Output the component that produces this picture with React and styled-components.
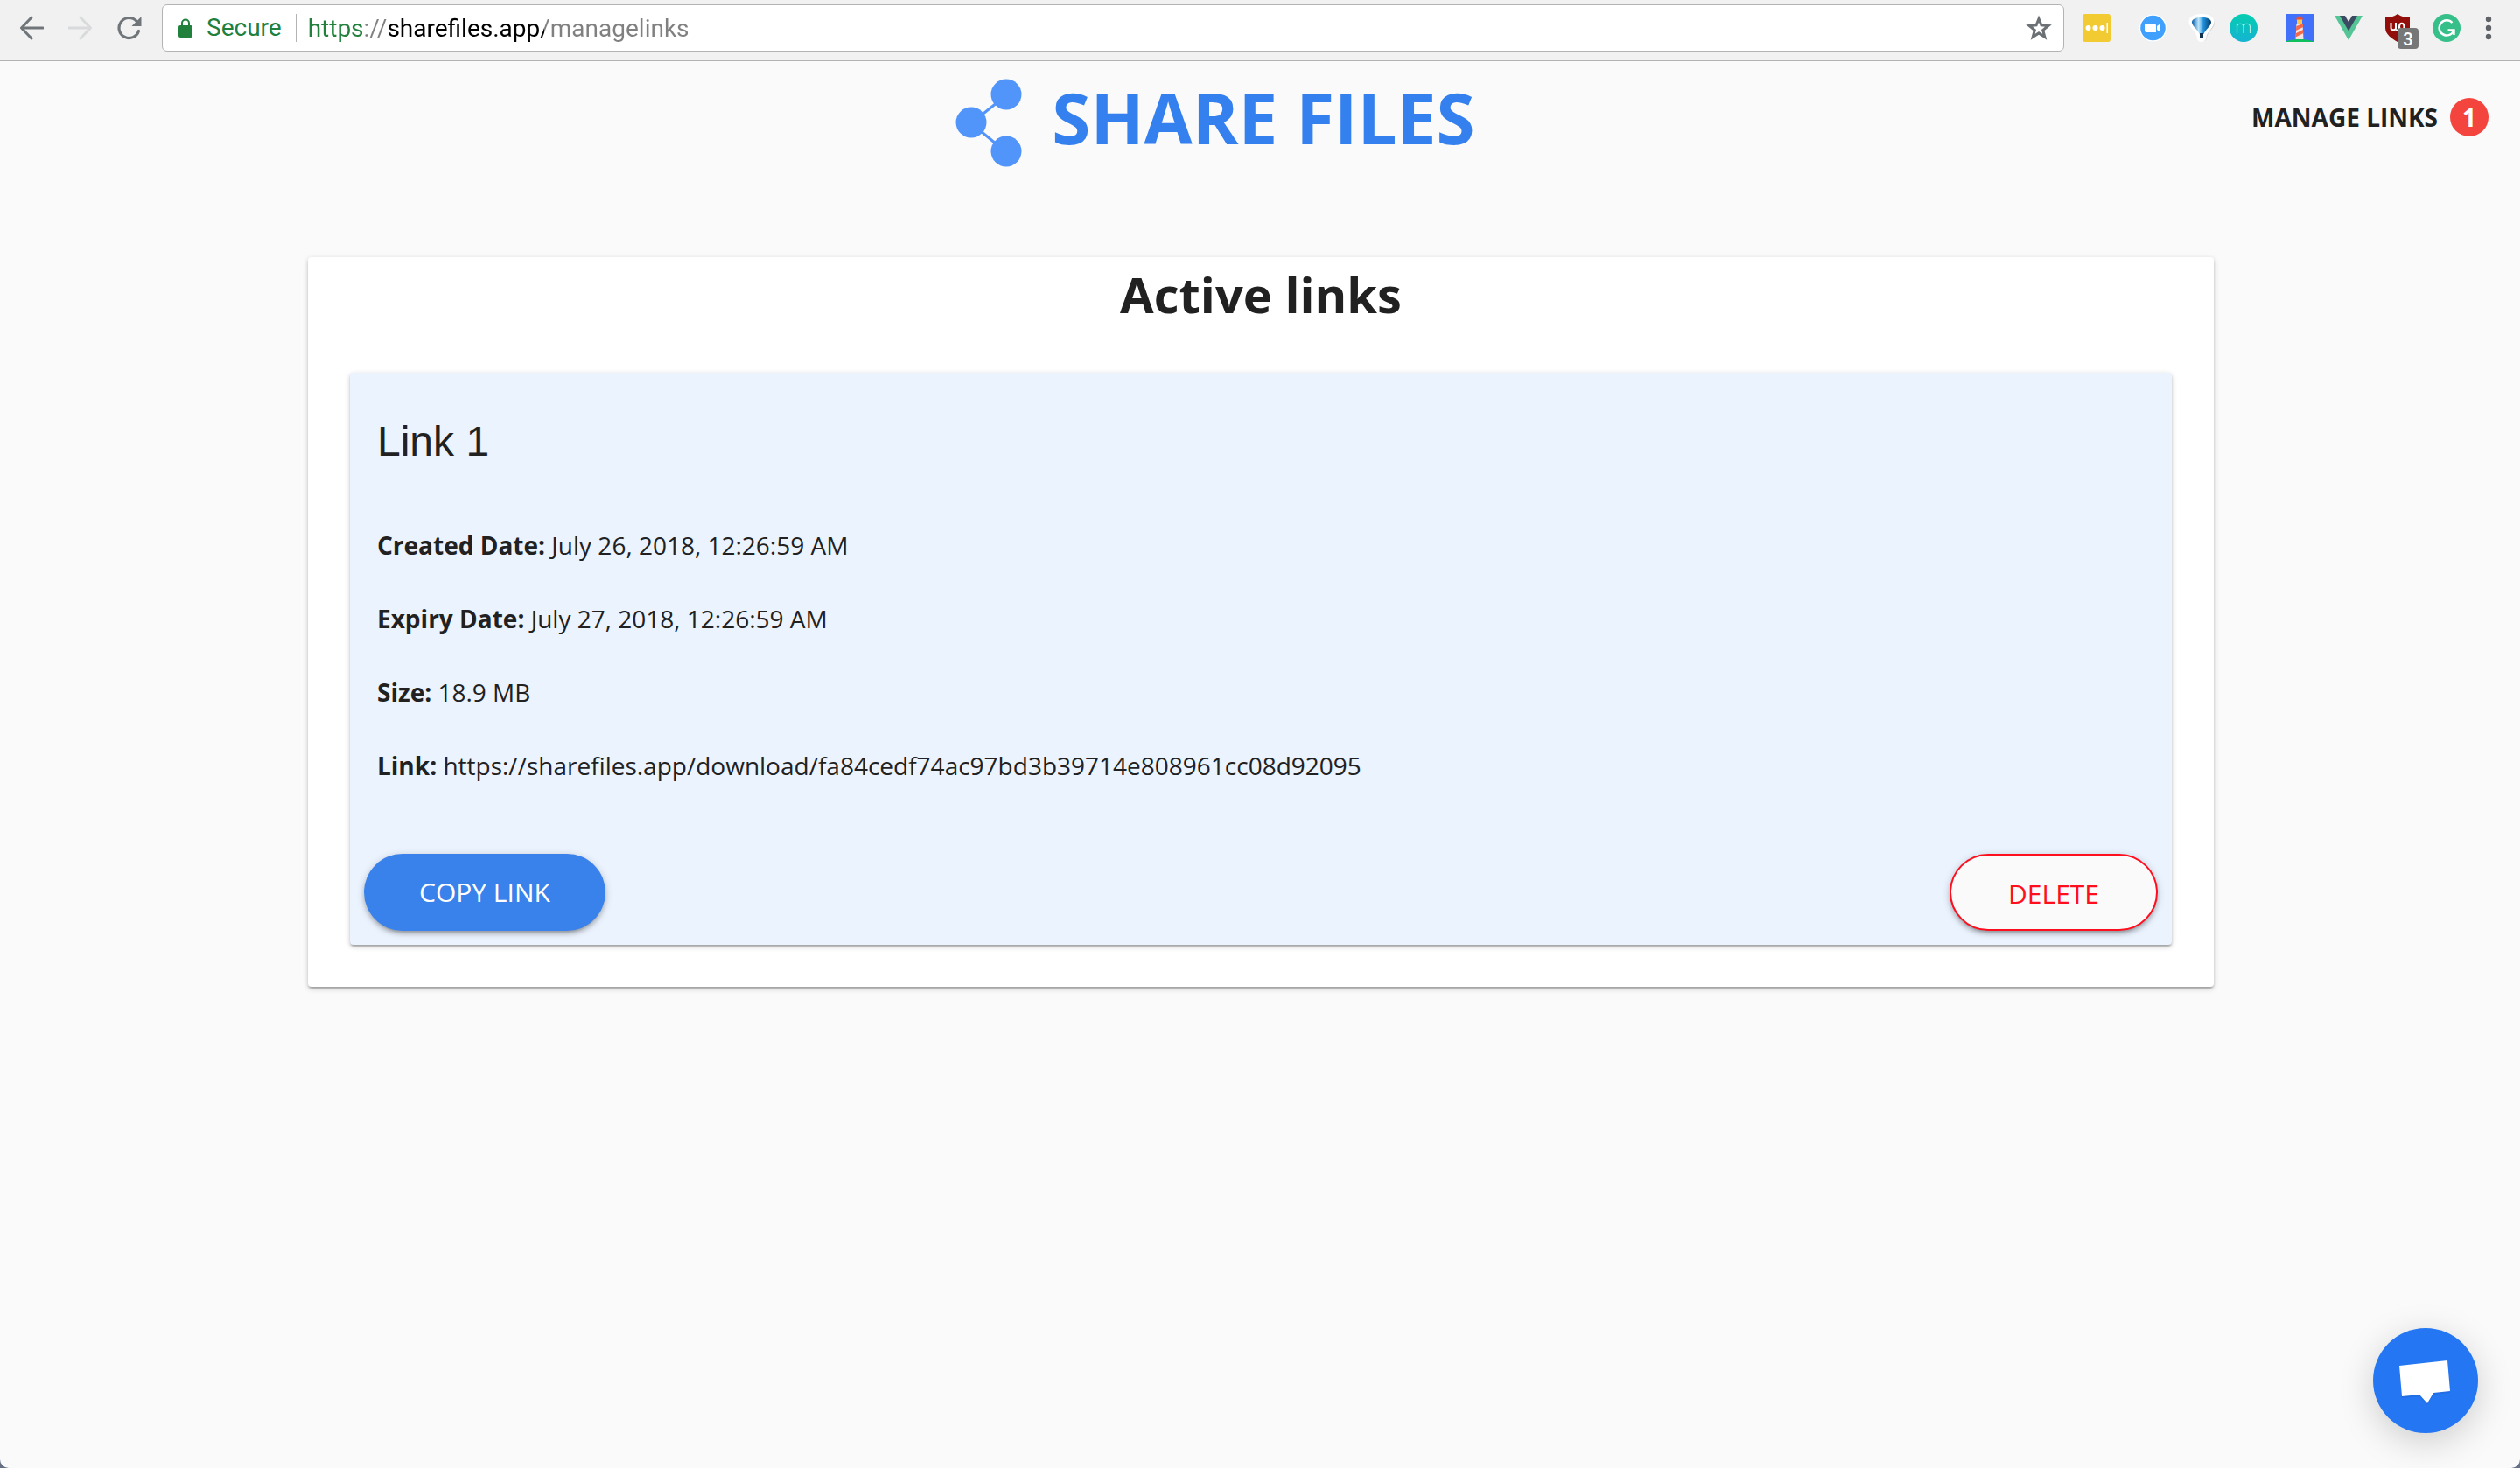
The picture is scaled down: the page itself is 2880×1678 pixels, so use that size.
import React, { useState } from 'react';
import styled, { createGlobalStyle } from 'styled-components';

const GlobalStyle = createGlobalStyle`
  * {
    box-sizing: border-box;
  }

  html {
    background: #667085;
  }

  body {
    color: #212121;
    font-family: 'Open Sans', sans-serif;
    font-size: 28px;
    line-height: 38px;
    margin: 0;
  }

  button,
  input {
    background: none;
    border: 0;
    font-family: inherit;
    margin: 0;
    padding: 0;
  }

  button {
    cursor: pointer;
  }

  svg {
    display: block;
  }
`;

const Window = styled.div`
  background: #fafafa;
  border-radius: 0 0 10px 10px;
  min-height: 100vh;
`;

const Toolbar = styled.div`
  align-items: center;
  background: #f1f1f1;
  border-bottom: 1px solid #b3b3b3;
  display: flex;
  height: 70px;
  padding: 0 20px 5px 8px;
`;

const NavButton = styled.button`
  align-items: center;
  display: flex;
  height: 56px;
  justify-content: center;
  width: 56px;
`;

const AddressBar = styled.div`
  align-items: center;
  background: #fff;
  border: 1px solid #b3b3b3;
  border-radius: 6px;
  display: flex;
  flex: 1;
  font-family: Roboto, sans-serif;
  height: 54px;
  margin: 0 21px 0 9px;
  padding: 0 13px 0 18px;
`;

const Secure = styled.span`
  border-right: 1px solid #b3b3b3;
  color: #20803c;
  line-height: 32px;
  margin-left: 16px;
  padding-right: 16px;
`;

const AddressInput = styled.input`
  background: linear-gradient(
    90deg,
    #20803c 65px,
    #808080 65px,
    #808080 92px,
    #000 92px,
    #000 270px,
    #808080 270px
  );
  background-clip: text;
  color: #808080;
  flex: 1;
  font-size: 28px;
  height: 40px;
  margin-left: 13px;
  min-width: 0;
  outline: 0;
  -webkit-text-fill-color: transparent;
`;

const Extensions = styled.div`
  display: flex;
`;

const ExtensionButton = styled.button`
  display: block;
  height: 32px;
  position: relative;
  width: ${({ $slot }) => $slot}px;
`;

const BlockedCount = styled.span`
  background: #777;
  border-radius: 4px;
  bottom: -8px;
  color: #fff;
  font-family: Roboto, sans-serif;
  font-size: 20px;
  font-weight: 500;
  height: 24px;
  left: 16px;
  line-height: 26px;
  position: absolute;
  text-align: center;
  width: 24px;
`;

const Header = styled.header`
  align-items: center;
  display: grid;
  grid-template-columns: 1fr auto 1fr;
  height: 128px;
  padding: 0 36px;
`;

const Logo = styled.a`
  align-items: center;
  color: #3480ee;
  display: flex;
  font-size: 80px;
  font-weight: 700;
  gap: 34px;
  grid-column: 2;
  line-height: 108px;
  padding-right: 102px;
  text-decoration: none;
`;

const ManageLinks = styled.a`
  align-items: center;
  color: #212121;
  display: flex;
  font-weight: 700;
  gap: 14px;
  justify-self: end;
  text-decoration: none;
`;

const Badge = styled.span`
  background: #f3453e;
  border-radius: 50%;
  color: #fff;
  height: 44px;
  line-height: 44px;
  text-align: center;
  width: 44px;
`;

const Card = styled.section`
  border-radius: 4px;
  box-shadow: 0 2px 6px rgba(0, 0, 0, 0.2), 0 2px 2px rgba(0, 0, 0, 0.14),
    0 4px 2px -2px rgba(0, 0, 0, 0.12);
`;

const ActiveLinks = styled(Card)`
  background: #fff;
  margin: 96px 350px 0 352px;
  padding: 4px 48px 48px;
`;

const Title = styled.h1`
  font-size: 56px;
  line-height: 76px;
  margin: 0 0 52px;
  text-align: center;
`;

const LinkCard = styled(Card)`
  background: #ebf3fe;
  padding: 52px 16px 16px;
`;

const LinkName = styled.h2`
  font-family: 'Liberation Sans', Arial, sans-serif;
  font-size: 48px;
  font-weight: 400;
  line-height: 54px;
  margin: 0 15px 72px;
`;

const Details = styled.dl`
  display: flex;
  flex-direction: column;
  gap: 46px;
  margin: 0 15px 82px;
`;

const Detail = styled.div`
  dt {
    display: inline;
    font-weight: 700;
  }

  dd {
    display: inline;
    margin: 0;
  }
`;

const Actions = styled.div`
  display: flex;
  justify-content: space-between;
`;

const Button = styled.button`
  background: #3982eb;
  border-radius: 44px;
  box-shadow: 0 2px 10px rgba(0, 0, 0, 0.2), 0 4px 4px rgba(0, 0, 0, 0.14),
    0 6px 2px -4px rgba(0, 0, 0, 0.12);
  color: #fff;
  font-size: 30px;
  height: 88px;
  line-height: 40px;
  padding: 0 63px;
`;

const OutlineButton = styled(Button)`
  background: #fafafa;
  border: 2px solid #ff0f1e;
  color: #ff0f1e;
  padding: 4px 65px 0;
`;

const ChatButton = styled.button`
  background: #2476f2;
  border-radius: 50%;
  bottom: 40px;
  box-shadow: 0 10px 40px rgba(0, 0, 0, 0.18);
  height: 120px;
  position: fixed;
  right: 48px;
  width: 120px;
`;

const BackIcon = () => (
  <svg width="28" height="28" viewBox="0 0 28 28" fill="none" stroke="#70757a" strokeWidth="3">
    <path d="M27 14H3M14 2 2.500 14 14 26" strokeLinecap="round" strokeLinejoin="round" />
  </svg>
);

const ForwardIcon = () => (
  <svg width="28" height="28" viewBox="0 0 28 28" fill="none" stroke="#d8dadb" strokeWidth="3">
    <path d="M1 14h24M14 2l11.500 12L14 26" strokeLinecap="round" strokeLinejoin="round" />
  </svg>
);

const ReloadIcon = () => (
  <svg width="28" height="28" viewBox="0 0 28 28">
    <path
      d="M24.500 17.500A11.500 11.500 0 1 1 22 6.200"
      fill="none"
      stroke="#70757a"
      strokeLinecap="round"
      strokeWidth="3.200"
    />
    <path d="M27.500 1v11h-11z" fill="#70757a" />
  </svg>
);

const LockIcon = () => (
  <svg width="16" height="22" viewBox="0 0 16 22">
    <path d="M4 9V5.500a4 4 0 0 1 8 0V9" fill="none" stroke="#20803c" strokeWidth="2" />
    <rect y="8" width="16" height="14" rx="2" fill="#20803c" />
  </svg>
);

const StarIcon = () => (
  <svg width="30" height="30" viewBox="0 0 30 30">
    <path
      d="M15 4.500l2.900 7.400 8 .5-6.200 5.100 2.100 7.800-6.800-4.400-6.800 4.400 2.100-7.800-6.200-5.100 8-.5z"
      fill="none"
      stroke="#6b7075"
      strokeWidth="3"
    />
  </svg>
);

const PasswordIcon = () => (
  <svg width="32" height="32" viewBox="0 0 32 32">
    <rect width="32" height="32" rx="3" fill="#f2ca32" />
    <g fill="#fff">
      <circle cx="6.500" cy="16" r="3" />
      <circle cx="14.500" cy="16" r="3" />
      <circle cx="22.500" cy="16" r="3" />
      <rect x="27.500" y="10" width="1.500" height="12" />
    </g>
  </svg>
);

const VideoIcon = () => (
  <svg width="32" height="32" viewBox="0 0 32 32">
    <circle cx="16.500" cy="16" r="15.500" fill="#fff" />
    <circle cx="16.500" cy="16" r="14.300" fill="#3fa0fd" />
    <path
      d="M7 11h10.500a2.500 2.500 0 0 1 2.500 2.500V21H9.500A2.500 2.500 0 0 1 7 18.500zM21 14l4-3v10l-4-3z"
      fill="#fff"
    />
  </svg>
);

const BalloonIcon = () => (
  <svg width="32" height="32" viewBox="0 0 32 32">
    <defs>
      <linearGradient id="balloon">
        <stop offset="0" stopColor="#0a5fa8" />
        <stop offset="0.350" stopColor="#bfe6fb" />
        <stop offset="0.600" stopColor="#1d8fdb" />
        <stop offset="1" stopColor="#063863" />
      </linearGradient>
    </defs>
    <path
      d="M17.500 2C9 2 3 5 3 10c0 6 8 10 9 17 0 6 10 6 10 0 1-7 9-11 9-17 0-5-5-8-13.500-8z"
      fill="#cfcfcf"
    />
    <path
      d="M16 0C8 0 1.500 3 1.500 9c0 6 8 11 9 17 0 8 11 8 11 0 1-6 9-11 9-17 0-6-6.500-9-14.500-9z"
      fill="#fff"
    />
    <path
      d="M16 4C9 4 5 6 5 9.500 5 14 12 18 13.500 23h5C20 18 27 14 27 9.500 27 6 23 4 16 4z"
      fill="url(#balloon)"
    />
    <path d="M14 22h4v5h-4z" fill="#12344f" />
  </svg>
);

const MomentumIcon = () => (
  <svg width="32" height="32" viewBox="0 0 32 32">
    <defs>
      <linearGradient id="momentum" x2="0" y2="1">
        <stop offset="0" stopColor="#06cdb0" />
        <stop offset="1" stopColor="#14b3d2" />
      </linearGradient>
    </defs>
    <circle cx="16" cy="16" r="16" fill="url(#momentum)" />
    <path
      d="M8.500 22V11M8.500 15c0-5 7.500-5 7.500 0v7M16 15c0-5 7.500-5 7.500 0v7"
      fill="none"
      stroke="#a5efe5"
      strokeWidth="1.200"
    />
  </svg>
);

const LighthouseIcon = () => (
  <svg width="32" height="32" viewBox="0 0 32 32">
    <path d="M0 0h32v32H0z" fill="#4170fa" />
    <path d="M0 32c4-4 28-4 32 0z" fill="#0fc05c" />
    <path d="M12.500 11h7l1 18h-9z" fill="#f7e4e0" />
    <path d="M12.300 14l7.500-3 .4 4-8.300 4zM12 22l8-4 .5 4-9 4.500z" fill="#f4694a" />
    <path d="M13 6h6v5h-6z" fill="#fbc54d" />
    <path d="M12 6.500c0-2 2-4 4-4.500 2 .5 4 2.500 4 4.500z" fill="#e8503a" />
  </svg>
);

const VueIcon = () => (
  <svg width="32" height="32" viewBox="0 0 32 32">
    <path d="M0 2h32L16 30z" fill="#55c596" />
    <path d="M6 2h20L16 19.500z" fill="#3b4b62" />
    <path d="M12 2h8l-4 7z" fill="#f1f1f1" />
  </svg>
);

const ShieldIcon = () => (
  <svg width="32" height="32" viewBox="0 0 32 32">
    <path d="M16 0c4 3 9 4 14 4v12c0 7-7 12-14 16C9 28 2 23 2 16V4c5 0 10-1 14-4z" fill="#920e0a" />
    <path
      d="M8.500 10v6c0 3 5.500 3 5.500 0v-6m0 8.500h4m0 1v-5c0-5 5.500-5 5.500 0s-5.500 4-5.500 0"
      fill="none"
      stroke="#fff"
      strokeWidth="2"
    />
  </svg>
);

const GrammarIcon = () => (
  <svg width="32" height="32" viewBox="0 0 32 32">
    <circle cx="16" cy="16" r="16" fill="#36bf89" />
    <path
      d="M22.500 10A8.600 8.600 0 1 0 24 19.500M17.500 18.500h7V24"
      fill="none"
      stroke="#fff"
      strokeWidth="2.400"
    />
  </svg>
);

const MenuIcon = () => (
  <svg width="32" height="32" viewBox="0 0 32 32" fill="#5f6368">
    <circle cx="16" cy="6" r="3.200" />
    <circle cx="16" cy="16" r="3.200" />
    <circle cx="16" cy="26" r="3.200" />
  </svg>
);

const ShareIcon = () => (
  <svg width="76" height="114" viewBox="0 0 76 114" fill="#5194fa">
    <path d="M58 32 18 64l40 33" fill="none" stroke="#5194fa" strokeWidth="3" />
    <circle cx="58" cy="31" r="17.500" />
    <circle cx="18" cy="63" r="17.500" />
    <circle cx="58" cy="96" r="17.500" />
  </svg>
);

const ChatIcon = () => (
  <svg width="120" height="120" viewBox="0 0 120 120">
    <path d="M30 44l55-6 3 36-19 2-7 12-9-10-20 2z" fill="#1d63d0" opacity="0.400" />
    <path d="M30 43l55-6 3 35-19 2-7 12-9-10-20 2z" fill="#fff" />
  </svg>
);

const extensions = [
  { name: 'Passwords', Icon: PasswordIcon, slot: 64 },
  { name: 'Video calls', Icon: VideoIcon, slot: 56 },
  { name: 'Balloon', Icon: BalloonIcon, slot: 48 },
  { name: 'Momentum', Icon: MomentumIcon, slot: 64 },
  { name: 'Lighthouse', Icon: LighthouseIcon, slot: 56 },
  { name: 'Vue devtools', Icon: VueIcon, slot: 56 },
  { name: 'Blocker', Icon: ShieldIcon, slot: 56, count: 3 },
  { name: 'Grammar', Icon: GrammarIcon, slot: 48 },
  { name: 'Menu', Icon: MenuIcon, slot: 32 },
];

const links = [
  {
    id: 1,
    created: 'July 26, 2018, 12:26:59 AM',
    expiry: 'July 27, 2018, 12:26:59 AM',
    size: '18.9 MB',
    url: 'https://sharefiles.app/download/fa84cedf74ac97bd3b39714e808961cc08d92095',
  },
];

const BrowserToolbar = () => {
  const [address, setAddress] = useState('https://sharefiles.app/managelinks');

  return (
    <Toolbar>
      <NavButton aria-label="Back">
        <BackIcon />
      </NavButton>
      <NavButton aria-label="Forward">
        <ForwardIcon />
      </NavButton>
      <NavButton aria-label="Reload">
        <ReloadIcon />
      </NavButton>
      <AddressBar>
        <LockIcon />
        <Secure>Secure</Secure>
        <AddressInput
          aria-label="Address"
          onChange={event => setAddress(event.target.value)}
          spellCheck={false}
          value={address}
        />
        <button aria-label="Bookmark this page" type="button">
          <StarIcon />
        </button>
      </AddressBar>
      <Extensions>
        {extensions.map(({ name, Icon, slot, count }) => (
          <ExtensionButton key={name} aria-label={name} $slot={slot}>
            <Icon />
            {count && <BlockedCount>{count}</BlockedCount>}
          </ExtensionButton>
        ))}
      </Extensions>
    </Toolbar>
  );
};

const LinkItem = ({ link, number }) => (
  <LinkCard as="article">
    <LinkName>Link {number}</LinkName>
    <Details>
      <Detail>
        <dt>Created Date:</dt> <dd>{link.created}</dd>
      </Detail>
      <Detail>
        <dt>Expiry Date:</dt> <dd>{link.expiry}</dd>
      </Detail>
      <Detail>
        <dt>Size:</dt> <dd>{link.size}</dd>
      </Detail>
      <Detail>
        <dt>Link:</dt> <dd>{link.url}</dd>
      </Detail>
    </Details>
    <Actions>
      <Button type="button">COPY LINK</Button>
      <OutlineButton type="button">DELETE</OutlineButton>
    </Actions>
  </LinkCard>
);

const App = () => (
  <Window>
    <GlobalStyle />
    <BrowserToolbar />
    <Header>
      <Logo href="/">
        <ShareIcon />
        SHARE FILES
      </Logo>
      <ManageLinks href="/managelinks">
        MANAGE LINKS <Badge>{links.length}</Badge>
      </ManageLinks>
    </Header>
    <main>
      <ActiveLinks>
        <Title>Active links</Title>
        {links.map((link, index) => (
          <LinkItem key={link.id} link={link} number={index + 1} />
        ))}
      </ActiveLinks>
    </main>
    <ChatButton aria-label="Open chat" type="button">
      <ChatIcon />
    </ChatButton>
  </Window>
);

export default App;
